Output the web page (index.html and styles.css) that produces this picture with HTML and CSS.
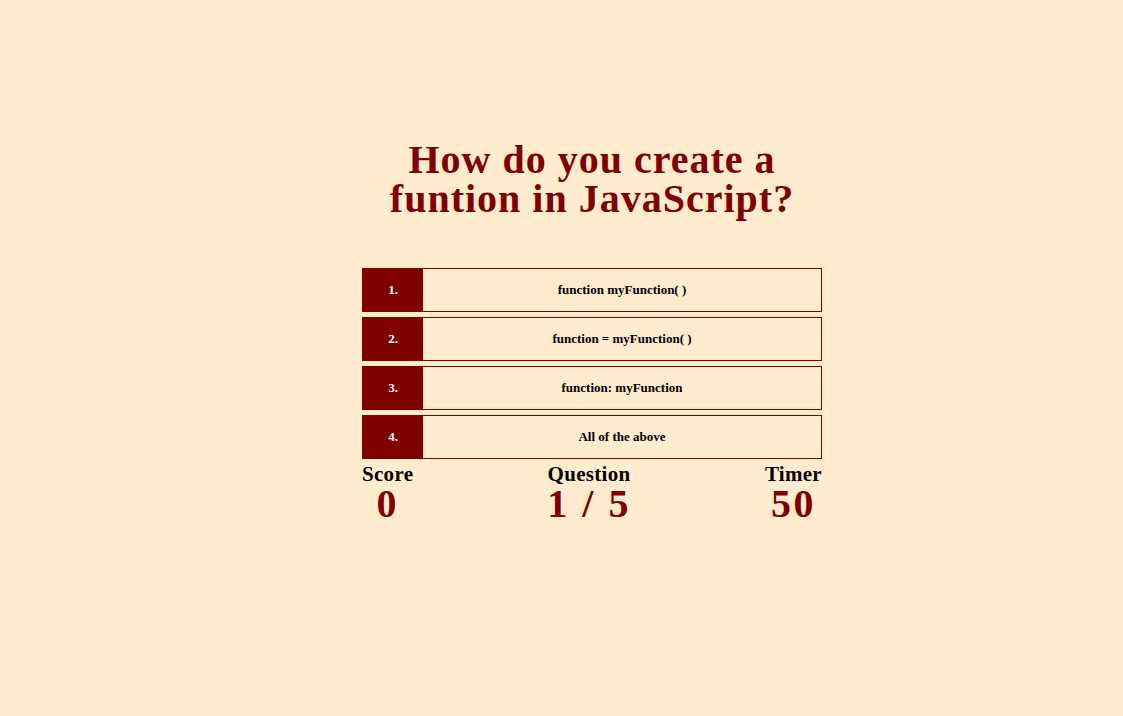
FILE: index.html
```html
<!DOCTYPE html>
<html>
<head>
<meta charset="utf-8">
<link rel="stylesheet" href="styles.css">
</head>
<body>
<main class="quiz">
  <h1 class="question">How do you create a<br>funtion in JavaScript?</h1>
  <ul class="choices">
    <li class="choice"><span class="choice-num">1.</span><span class="choice-text">function myFunction( )</span></li>
    <li class="choice"><span class="choice-num">2.</span><span class="choice-text">function = myFunction( )</span></li>
    <li class="choice"><span class="choice-num">3.</span><span class="choice-text">function: myFunction</span></li>
    <li class="choice"><span class="choice-num">4.</span><span class="choice-text">All of the above</span></li>
  </ul>
  <div class="hud">
    <div class="hud-item"><div class="hud-label">Score</div><div class="hud-value">0</div></div>
    <div class="hud-item"><div class="hud-label">Question</div><div class="hud-value">1 / 5</div></div>
    <div class="hud-item"><div class="hud-label">Timer</div><div class="hud-value">50</div></div>
  </div>
</main>
</body>
</html>
```

FILE: styles.css
```css
html, body {
  margin: 0;
  padding: 0;
  background: #ffebcd;
}
body {
  font-family: "Liberation Serif", "DejaVu Serif", serif;
  font-weight: bold;
  padding-left: 61px;
}
.quiz {
  width: 460px;
  margin: 0 auto;
  padding-top: 140px;
  display: flex;
  flex-direction: column;
}
.question {
  margin: 0 0 50px;
  text-align: center;
  color: #800000;
  font-size: 40px;
  line-height: 39px;
  letter-spacing: 1px;
  font-weight: bold;
}
.choices {
  list-style: none;
  margin: 0;
  padding: 0;
  display: flex;
  flex-direction: column;
  gap: 5px;
}
.choice {
  display: flex;
  height: 44px;
  box-sizing: border-box;
  border: 1px solid #800000;
  font-size: 13px;
}
.choice-num {
  width: 60px;
  background: #800000;
  color: #ffffff;
  display: flex;
  align-items: center;
  justify-content: center;
}
.choice-text {
  flex: 1;
  color: #000;
  display: flex;
  align-items: center;
  justify-content: center;
}
.hud {
  display: flex;
  justify-content: space-between;
  margin-top: 4px;
}
.hud-item {
  text-align: center;
}
.hud-label {
  font-size: 21px;
  line-height: 22px;
  letter-spacing: 0.3px;
  color: #000;
}
.hud-value {
  font-size: 40px;
  line-height: 38px;
  letter-spacing: 2.5px;
  color: #800000;
}
```
